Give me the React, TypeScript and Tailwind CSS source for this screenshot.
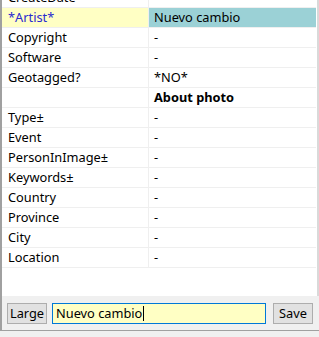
import * as React from 'react'

type Row = {
  label: string
  value: string
  bold?: boolean
  active?: boolean
}

const rows: Row[] = [
  { label: 'CreateDate', value: '' },
  { label: '*Artist*', value: 'Nuevo cambio', active: true },
  { label: 'Copyright', value: '-' },
  { label: 'Software', value: '-' },
  { label: 'Geotagged?', value: '*NO*' },
  { label: '', value: 'About photo', bold: true },
  { label: 'Type±', value: '-' },
  { label: 'Event', value: '-' },
  { label: 'PersonInImage±', value: '-' },
  { label: 'Keywords±', value: '-' },
  { label: 'Country', value: '-' },
  { label: 'Province', value: '-' },
  { label: 'City', value: '-' },
  { label: 'Location', value: '-' },
]

function MetaRow({ row, first }: { row: Row; first?: boolean }) {
  return (
    <div
      className={
        'flex h-[20px] border-b border-[#efefef] ' + (first ? '-mt-[12px]' : '')
      }
    >
      <div
        className={
          'flex w-[147px] shrink-0 items-center border-r border-[#efefef] pl-[6px] ' +
          (row.active ? 'bg-[#ffffc4] text-[#2a2ad0]' : 'text-black')
        }
      >
        {row.label}
      </div>
      <div
        className={
          'flex flex-1 items-center pl-[5px] ' +
          (row.active ? 'bg-[#9bd1d6]' : '') +
          (row.bold ? ' font-bold' : '')
        }
      >
        {row.value}
      </div>
    </div>
  )
}

export default function App() {
  return (
    <div
      className="flex h-[337px] w-[319px] flex-col overflow-hidden bg-[#f0f0f0] text-[12.8px]"
      style={{ fontFamily: '"Noto Sans", "Open Sans", sans-serif' }}
    >
      <div className="flex h-[331px] flex-col border-l-2 border-b border-l-[#a0a0a0] border-b-[#a0a0a0]">
        <div className="h-[296px] overflow-hidden border-r-2 border-r-[#d9d9d9] bg-white pr-px">
          {rows.map((r, i) => (
            <MetaRow key={i} row={r} first={i === 0} />
          ))}
        </div>
        <div className="flex flex-1 items-start gap-[5px] pl-[5px] pt-[7px]">
          <button className="h-[21px] w-[40px] border border-[#adadad] bg-[#e1e1e1] leading-none">
            Large
          </button>
          <div className="flex h-[21px] w-[214px] items-center border border-[#0078d7] bg-[#ffffc4] pl-[3px]">
            <span>Nuevo cambio</span>
            <span className="ml-px h-[15px] w-px bg-black" />
          </div>
          <button className="ml-[2px] h-[21px] w-[40px] border border-[#adadad] bg-[#e1e1e1] leading-none">
            Save
          </button>
        </div>
      </div>
    </div>
  )
}
